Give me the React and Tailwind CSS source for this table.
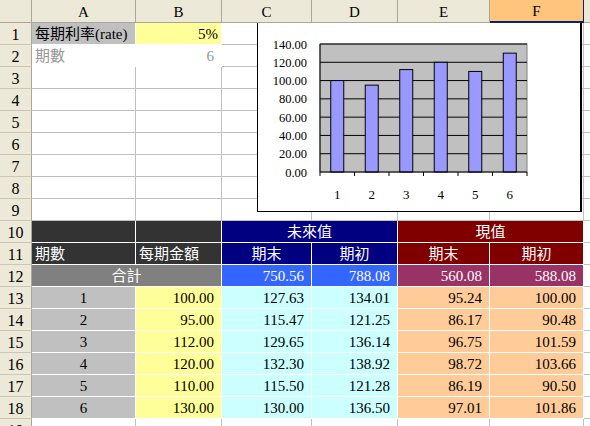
import React from "react";

const cols = ["A", "B", "C", "D", "E", "F"];

const dataRows = [
  ["1", "100.00", "127.63", "134.01", "95.24", "100.00"],
  ["2", "95.00", "115.47", "121.25", "86.17", "90.48"],
  ["3", "112.00", "129.65", "136.14", "96.75", "101.59"],
  ["4", "120.00", "132.30", "138.92", "98.72", "103.66"],
  ["5", "110.00", "115.50", "121.28", "86.19", "90.50"],
  ["6", "130.00", "130.00", "136.50", "97.01", "101.86"],
];

const values = [100, 95, 112, 120, 110, 130];

const base =
  "flex items-end pb-[1px] leading-[17px] whitespace-nowrap overflow-hidden";
const gridCell = "bg-white border-r border-b border-[#c0c0c0]";
const fillBorder = "border-r border-b border-white";

function Cell({ className = "", align = "left", span, children }) {
  const alignCls =
    align === "right"
      ? "justify-end pr-[7px]"
      : align === "center"
      ? "justify-center"
      : "justify-start pl-[3px]";
  return (
    <div className={`${base} ${alignCls} ${span ? "col-span-2" : ""} ${className}`}>
      {children}
    </div>
  );
}

function RowHead({ n }) {
  return (
    <div className="flex items-end justify-center pb-[1px] leading-[17px] text-[16px] bg-[#ece9d8] border-r border-b border-r-[#aca899] border-b-[#cbc7b8]">
      {n}
    </div>
  );
}

function Chart() {
  const left = 62;
  const top = 21;
  const w = 207;
  const h = 128;
  const step = h / 7;
  const cat = w / 6;
  return (
    <div className="absolute left-[257px] top-[23px] w-[325px] h-[189px] bg-white border-l border-r-2 border-b border-black">
      <svg width="322" height="188" className="block">
        <rect x={left} y={top} width={w} height={h} fill="#c0c0c0" stroke="#808080" />
        {Array.from({ length: 7 }).map((_, k) => (
          <line
            key={k}
            x1={left}
            x2={left + w}
            y1={top + k * step}
            y2={top + k * step}
            stroke="#000"
            strokeWidth="1"
          />
        ))}
        {Array.from({ length: 8 }).map((_, k) => (
          <text
            key={k}
            x="49"
            y={top + k * step + 4.5}
            textAnchor="end"
            fontSize="12.5"
            fontFamily="Liberation Serif, serif"
          >
            {(140 - k * 20).toFixed(2)}
          </text>
        ))}
        {values.map((v, i) => {
          const bh = (v * h) / 140;
          return (
            <rect
              key={i}
              x={left + (i + 0.5) * cat - 6.5}
              y={top + h - bh}
              width="13"
              height={bh}
              fill="#9999ff"
              stroke="#000"
              strokeWidth="1"
            />
          );
        })}
        <line x1={left} x2={left} y1={top} y2={top + h} stroke="#000" />
        <line x1={left} x2={left + w} y1={top + h} y2={top + h} stroke="#000" />
        {Array.from({ length: 7 }).map((_, i) => (
          <line
            key={i}
            x1={left + i * cat}
            x2={left + i * cat}
            y1={top + h}
            y2={top + h + 4}
            stroke="#000"
          />
        ))}
        {values.map((_, i) => (
          <text
            key={i}
            x={left + (i + 0.5) * cat}
            y="176"
            textAnchor="middle"
            fontSize="13"
            fontFamily="Liberation Serif, serif"
          >
            {i + 1}
          </text>
        ))}
      </svg>
    </div>
  );
}

export default function App() {
  return (
    <div className="relative w-[590px] h-[426px] overflow-hidden bg-white text-black text-[15px] font-[family-name:Liberation_Serif,Noto_Sans_CJK_TC,serif]">
      <div className="grid grid-cols-[32px_104px_86px_90px_86px_92px_94px_1fr] grid-rows-[23px_repeat(19,22px)]">
        {/* column headers */}
        <div className="bg-[#ece9d8] border-r border-b border-[#aca899]" />
        {cols.map((c) =>
          c === "F" ? (
            <div
              key={c}
              className="flex items-center justify-center pt-[2px] text-[15px] bg-[#ffc57d] border-r border-r-[#0a246a] border-b-2 border-b-[#0a246a]"
            >
              {c}
            </div>
          ) : (
            <div
              key={c}
              className="flex items-center justify-center pt-[2px] text-[15px] bg-[#ece9d8] border-r border-b border-[#aca899]"
            >
              {c}
            </div>
          )
        )}
        <div className="bg-[#ece9d8] border-b border-[#aca899]" />

        {/* row 1 */}
        <RowHead n={1} />
        <Cell className={`bg-[#c0c0c0] ${fillBorder}`}>每期利率(rate)</Cell>
        <Cell align="right" className={`bg-[#ffff99] ${fillBorder} !pr-[3px]`}>
          5%
        </Cell>
        {[0, 1, 2, 3].map((i) => (
          <div key={i} className={gridCell} />
        ))}
        <div className="bg-white border-b border-[#c0c0c0]" />

        {/* row 2 */}
        <RowHead n={2} />
        <Cell className={`bg-white ${fillBorder} text-[#969696]`}>期數</Cell>
        <Cell align="right" className={`bg-white ${fillBorder} text-[#969696]`}>
          6
        </Cell>
        {[0, 1, 2, 3].map((i) => (
          <div key={i} className={gridCell} />
        ))}
        <div className="bg-white border-b border-[#c0c0c0]" />

        {/* rows 3-9 */}
        {[3, 4, 5, 6, 7, 8, 9].map((r) => (
          <React.Fragment key={r}>
            <RowHead n={r} />
            {cols.map((c) => (
              <div key={c} className={gridCell} />
            ))}
            <div className="bg-white border-b border-[#c0c0c0]" />
          </React.Fragment>
        ))}

        {/* row 10 */}
        <RowHead n={10} />
        <div className={`bg-[#333333] ${fillBorder}`} />
        <div className={`bg-[#333333] ${fillBorder}`} />
        <Cell span align="center" className={`bg-[#000080] text-white ${fillBorder}`}>
          未來值
        </Cell>
        <Cell span align="center" className={`bg-[#800000] text-white ${fillBorder}`}>
          現值
        </Cell>
        <div className="bg-white border-b border-[#c0c0c0]" />

        {/* row 11 */}
        <RowHead n={11} />
        <Cell className={`bg-[#333333] text-white ${fillBorder}`}>期數</Cell>
        <Cell className={`bg-[#333333] text-white ${fillBorder}`}>每期金額</Cell>
        <Cell align="center" className={`bg-[#000080] text-white ${fillBorder}`}>
          期末
        </Cell>
        <Cell align="center" className={`bg-[#000080] text-white ${fillBorder}`}>
          期初
        </Cell>
        <Cell align="center" className={`bg-[#800000] text-white ${fillBorder}`}>
          期末
        </Cell>
        <Cell align="center" className={`bg-[#800000] text-white ${fillBorder}`}>
          期初
        </Cell>
        <div className="bg-white border-b border-[#c0c0c0]" />

        {/* row 12 */}
        <RowHead n={12} />
        <Cell span align="center" className={`bg-[#808080] text-white ${fillBorder}`}>
          合計
        </Cell>
        <Cell align="right" className={`bg-[#3366ff] text-white ${fillBorder}`}>
          750.56
        </Cell>
        <Cell align="right" className={`bg-[#3366ff] text-white ${fillBorder}`}>
          788.08
        </Cell>
        <Cell align="right" className={`bg-[#993366] text-white ${fillBorder}`}>
          560.08
        </Cell>
        <Cell align="right" className={`bg-[#993366] text-white ${fillBorder}`}>
          588.08
        </Cell>
        <div className="bg-white border-b border-[#c0c0c0]" />

        {/* rows 13-18 */}
        {dataRows.map((row, i) => (
          <React.Fragment key={i}>
            <RowHead n={13 + i} />
            <Cell align="center" className={`bg-[#c0c0c0] ${fillBorder}`}>
              {row[0]}
            </Cell>
            <Cell align="right" className={`bg-[#ffff99] ${fillBorder}`}>
              {row[1]}
            </Cell>
            <Cell align="right" className={`bg-[#ccffff] ${fillBorder}`}>
              {row[2]}
            </Cell>
            <Cell align="right" className={`bg-[#ccffff] ${fillBorder}`}>
              {row[3]}
            </Cell>
            <Cell align="right" className={`bg-[#ffcc99] ${fillBorder}`}>
              {row[4]}
            </Cell>
            <Cell align="right" className={`bg-[#ffcc99] ${fillBorder}`}>
              {row[5]}
            </Cell>
            <div className="bg-white border-b border-[#c0c0c0]" />
          </React.Fragment>
        ))}

        {/* row 19, cut off by the window edge as in the original */}
        <RowHead n={19} />
        {cols.map((c) => (
          <div key={c} className={gridCell} />
        ))}
        <div className="bg-white border-b border-[#c0c0c0]" />
      </div>
      <Chart />
    </div>
  );
}
